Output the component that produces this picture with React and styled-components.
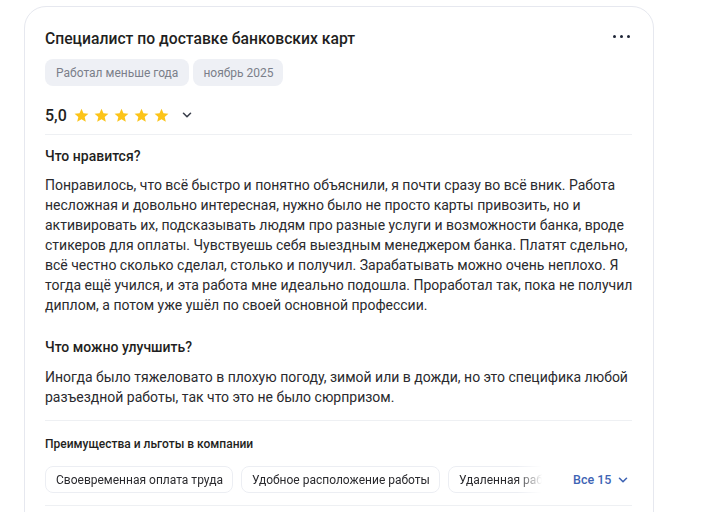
import React from "react";
import styled, { createGlobalStyle } from "styled-components";

const Global = createGlobalStyle`
  html, body { margin: 0; padding: 0; background: #ffffff; }
  body { font-family: Roboto, "Noto Sans", Arial, sans-serif; color: #1f1f22; }
  * { box-sizing: border-box; }
`;

const Page = styled.div`
  padding: 6px 0 0 24px;
  width: 702px;
  height: 512px;
  overflow: hidden;
`;

const Card = styled.div`
  width: 630px;
  min-height: 560px;
  border: 1px solid #e6e8ef;
  border-radius: 22px;
  padding: 21px 21px 0 20px;
  background: #fff;
`;

const Header = styled.div`
  display: flex;
  justify-content: space-between;
  align-items: center;
`;

const Title = styled.h2`
  margin: 0;
  font-size: 15.7px;
  line-height: 22px;
  font-weight: 500;
  color: #1f1f22;
`;

const Dots = styled.button`
  border: 0;
  background: none;
  padding: 0;
  display: flex;
  gap: 4px;
  margin-right: 2px;
  margin-top: -5px;
  cursor: pointer;
`;

const Dot = styled.span`
  width: 3px;
  height: 3px;
  border-radius: 50%;
  background: #1e2536;
`;

const Tags = styled.div`
  display: flex;
  gap: 4px;
  margin-top: 9px;
`;

const Tag = styled.span`
  height: 27px;
  padding: 0 ${(p) => p.$pad || 10}px;
  display: inline-flex;
  align-items: center;
  background: #eef0f5;
  border-radius: 8px;
  font-size: 12px;
  color: #7b7f8a;
`;

const RatingRow = styled.div`
  display: flex;
  align-items: center;
  height: 24px;
  margin-top: 17px;
  padding-bottom: 7px;
  box-sizing: content-box;
  border-bottom: 1px solid #eef0f3;
`;

const Score = styled.span`
  font-size: 16px;
  font-weight: 500;
  margin-right: 7px;
  color: #1f1f22;
`;

const Stars = styled.div`
  display: flex;
  gap: 5px;
  margin-right: 13px;
`;

const Section = styled.div`
  margin-top: ${(p) => p.$top}px;
`;

const Heading = styled.h3`
  margin: 0;
  font-size: 14px;
  line-height: 20px;
  font-weight: 500;
  color: #1f1f22;
`;

const Body = styled.p`
  margin: ${(p) => p.$gap}px 0 0;
  font-size: 14px;
  line-height: 20px;
  color: #2a2a2e;
  width: 590px;
`;

const Divider = styled.div`
  height: 1px;
  background: #eef0f3;
  margin-top: ${(p) => p.$top}px;
`;

const SubHeading = styled.h4`
  margin: 14px 0 0;
  font-size: 12px;
  line-height: 18px;
  font-weight: 500;
  color: #1f1f22;
`;

const ChipsRow = styled.div`
  display: flex;
  align-items: center;
  margin-top: 13px;
`;

const ChipsTrack = styled.div`
  display: flex;
  gap: 8px;
  width: 500px;
  overflow: hidden;
  -webkit-mask-image: linear-gradient(to right, #000 472px, transparent 497px);
  mask-image: linear-gradient(to right, #000 472px, transparent 497px);
`;

const Chip = styled.span`
  flex: none;
  height: 27px;
  padding: 0 9px 0 10px;
  display: inline-flex;
  align-items: center;
  border: 1px solid #eceef3;
  border-radius: 8px;
  font-size: 12px;
  color: #2a2a2e;
`;

const More = styled.button`
  margin-left: 28px;
  border: 0;
  background: none;
  padding: 0;
  display: flex;
  align-items: center;
  gap: 7px;
  font-family: inherit;
  font-size: 12.5px;
  font-weight: 500;
  color: #3e64b4;
  cursor: pointer;
`;

const Star = () => (
  <svg width="15" height="15" viewBox="0 0 24 24">
    <path
      fill="#fcc419"
      d="M12 1l3.2 7.3 7.9.7-6 5.2 1.8 7.8L12 18 5.1 22l1.8-7.8-6-5.2 7.9-.7z"
    />
  </svg>
);

const Chevron = ({ color = "#3a3f4b", size = 10 }) => (
  <svg width={size} height={size} viewBox="0 0 10 10">
    <path d="M1.5 3.3L5 6.7l3.5-3.4" fill="none" stroke={color} strokeWidth="1.6" strokeLinecap="round" strokeLinejoin="round" />
  </svg>
);

export default function App() {
  return (
    <>
      <Global />
      <Page>
        <Card>
          <Header>
            <Title>Специалист по доставке банковских карт</Title>
            <Dots aria-label="Ещё">
              <Dot />
              <Dot />
              <Dot />
            </Dots>
          </Header>
          <Tags>
            <Tag $pad={11}>Работал меньше года</Tag>
            <Tag>ноябрь 2025</Tag>
          </Tags>
          <RatingRow>
            <Score>5,0</Score>
            <Stars>
              <Star />
              <Star />
              <Star />
              <Star />
              <Star />
            </Stars>
            <Chevron />
          </RatingRow>
          <Section $top={11}>
            <Heading>Что нравится?</Heading>
            <Body $gap={9}>
              Понравилось, что всё быстро и понятно объяснили, я почти сразу во всё вник. Работа
              несложная и довольно интересная, нужно было не просто карты привозить, но и
              активировать их, подсказывать людям про разные услуги и возможности банка, вроде
              стикеров для оплаты. Чувствуешь себя выездным менеджером банка. Платят сдельно,
              всё честно сколько сделал, столько и получил. Зарабатывать можно очень неплохо. Я
              тогда ещё учился, и эта работа мне идеально подошла. Проработал так, пока не получил
              диплом, а потом уже ушёл по своей основной профессии.
            </Body>
          </Section>
          <Section $top={22}>
            <Heading>Что можно улучшить?</Heading>
            <Body $gap={10}>
              Иногда было тяжеловато в плохую погоду, зимой или в дожди, но это специфика любой
              разъездной работы, так что это не было сюрпризом.
            </Body>
          </Section>
          <Divider $top={13} />
          <SubHeading>Преимущества и льготы в компании</SubHeading>
          <ChipsRow>
            <ChipsTrack>
              <Chip>Своевременная оплата труда</Chip>
              <Chip>Удобное расположение работы</Chip>
              <Chip>Удаленная работа</Chip>
            </ChipsTrack>
            <More>
              Все 15
              <Chevron color="#3e64b4" />
            </More>
          </ChipsRow>
          <Divider $top={12} />
        </Card>
      </Page>
    </>
  );
}
